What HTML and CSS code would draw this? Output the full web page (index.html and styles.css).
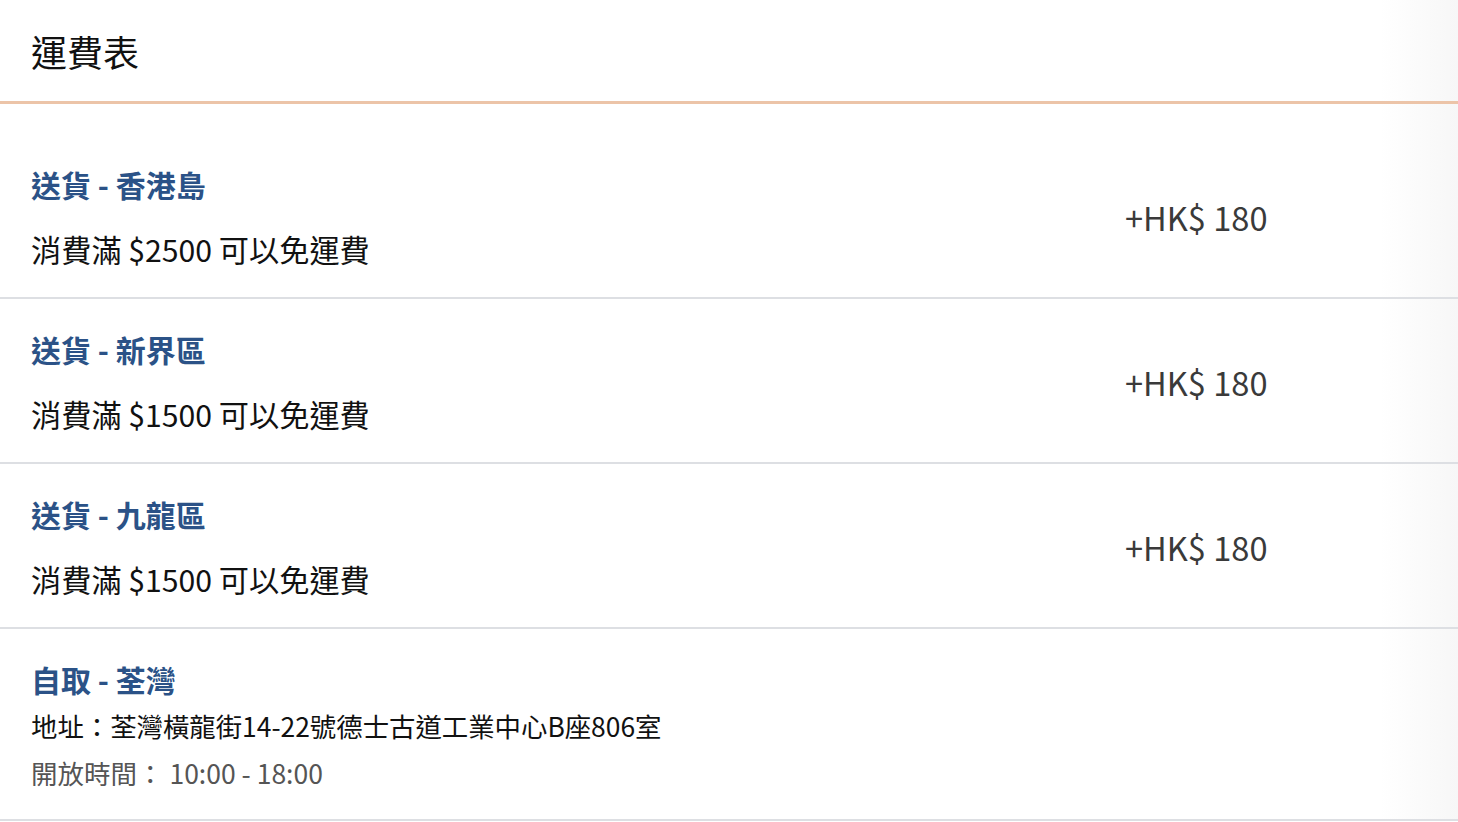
FILE: index.html
```html
<!DOCTYPE html>
<html lang="zh-Hant">
<head>
<meta charset="utf-8">
<title>運費表</title>
<link rel="stylesheet" href="styles.css">
</head>
<body>
<div class="panel">
  <div class="panel-head">
    <h1 class="panel-title">運費表</h1>
  </div>
  <ul class="rate-list">
    <li class="rate-row">
      <div class="rate-info">
        <div class="rate-name">送貨 - 香港島</div>
        <div class="rate-note">消費滿 $2500 可以免運費</div>
      </div>
      <div class="rate-price">+HK$ 180</div>
    </li>
    <li class="rate-row">
      <div class="rate-info">
        <div class="rate-name">送貨 - 新界區</div>
        <div class="rate-note">消費滿 $1500 可以免運費</div>
      </div>
      <div class="rate-price">+HK$ 180</div>
    </li>
    <li class="rate-row">
      <div class="rate-info">
        <div class="rate-name">送貨 - 九龍區</div>
        <div class="rate-note">消費滿 $1500 可以免運費</div>
      </div>
      <div class="rate-price">+HK$ 180</div>
    </li>
    <li class="rate-row pickup">
      <div class="rate-info">
        <div class="rate-name">自取 - 荃灣</div>
        <div class="rate-addr">地址：荃灣橫龍街14-22號德士古道工業中心B座806室</div>
        <div class="rate-hours">開放時間： 10:00 - 18:00</div>
      </div>
    </li>
  </ul>
</div>
</body>
</html>
```
FILE: styles.css
```css
html, body {
  margin: 0;
  padding: 0;
  background: #ffffff;
}
body {
  font-family: "Noto Sans CJK TC", "Noto Sans", sans-serif;
  color: #111111;
}
.panel {
  width: 1458px;
  background: linear-gradient(to right, #ffffff 0, #ffffff 1380px, #f7f7f7 1458px);
}
.panel-head {
  height: 101px;
  display: flex;
  align-items: center;
  padding: 0 31px;
  border-bottom: 3px solid #ecc4a8;
}
.panel-title {
  margin: 0;
  font-size: 36px;
  font-weight: 400;
  line-height: 40px;
  color: #111111;
}
.rate-list {
  list-style: none;
  margin: 0;
  padding: 30px 0 0;
}
.rate-row {
  display: grid;
  grid-template-columns: 1fr 302px;
  align-items: center;
  padding: 30px 31px 28px;
  border-bottom: 2px solid #dddfe3;
}
.rate-row.pickup {
  grid-template-columns: 1fr;
}
.rate-name {
  font-size: 30px;
  font-weight: 700;
  line-height: 40px;
  color: #2b5287;
}
.rate-note {
  margin-top: 25px;
  font-size: 30.2px;
  line-height: 40px;
  color: #111111;
}
.rate-price {
  font-size: 32.6px;
  line-height: 40px;
  color: #3a3a3a;
}
.rate-addr {
  margin-top: 9px;
  font-size: 26.4px;
  line-height: 36px;
  color: #111111;
}
.rate-hours {
  margin-top: 11px;
  font-size: 26.5px;
  line-height: 36px;
  color: #555555;
}
```
